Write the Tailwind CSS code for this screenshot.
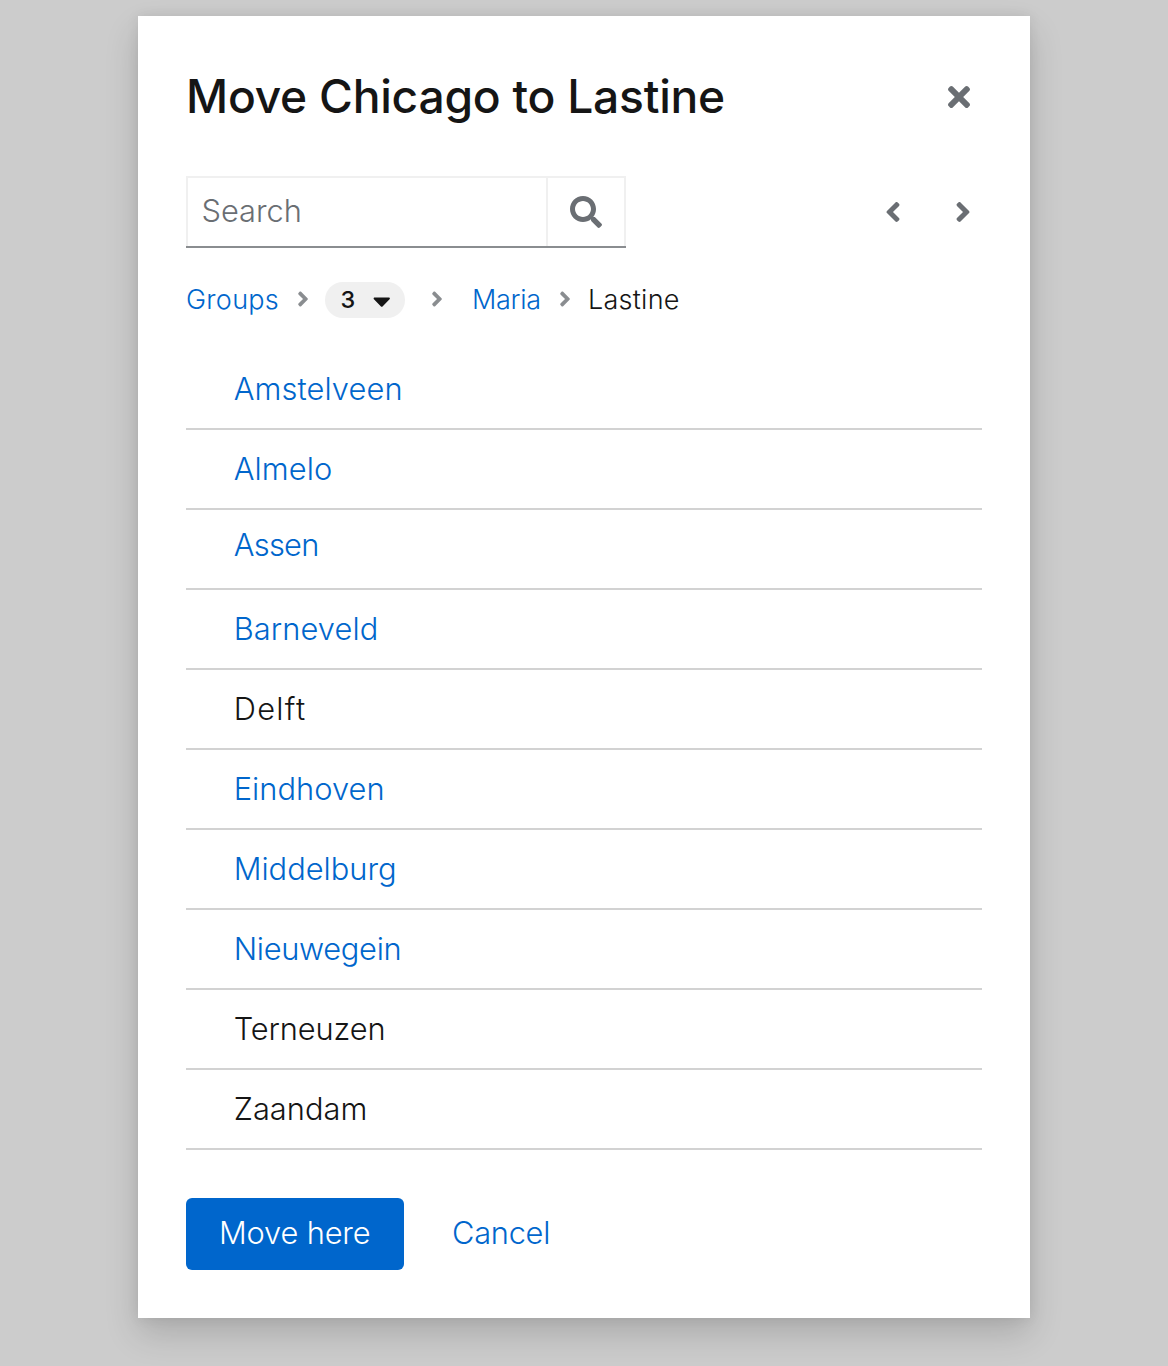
<!DOCTYPE html>
<html lang="en">
<head>
<meta charset="utf-8">
<title>Move Chicago to Lastine</title>
<script src="https://cdn.jsdelivr.net/npm/@tailwindcss/browser@4"></script>
</head>
<body class="min-h-screen bg-[#cccccc] pt-4 font-['Inter',sans-serif] font-light text-[#151515]">
<svg class="hidden">
  <symbol id="angle-right" viewBox="0 0 256 512"><path d="M224.3 273l-136 136c-9.4 9.4-24.6 9.4-33.9 0l-22.6-22.6c-9.4-9.4-9.4-24.6 0-33.9l96.4-96.4-96.4-96.4c-9.4-9.4-9.4-24.6 0-33.9L54.3 103c9.4-9.4 24.6-9.4 33.9 0l136 136c9.5 9.4 9.5 24.6.1 34z"/></symbol>
</svg>
<main role="dialog" class="mx-auto flex h-[1302px] w-[892px] flex-col bg-white px-12 shadow-[0_16px_32px_0_rgba(3,3,3,0.16),0_0_12px_0_rgba(3,3,3,0.08)]">
  <header class="flex h-[160px] items-center justify-between pr-3">
    <h1 class="text-[46.2px] leading-[58px] font-[450] tracking-[-0.25px]">Move Chicago to Lastine</h1>
    <button aria-label="Close" class="text-[#6a6e73]">
      <svg class="mt-[2px] h-8 w-[22px]" viewBox="0 0 352 512" fill="currentColor"><path d="M242.72 256l100.07-100.07c12.28-12.28 12.28-32.19 0-44.48l-22.24-22.24c-12.28-12.28-32.19-12.28-44.48 0L176 189.28 75.93 89.21c-12.28-12.28-32.19-12.28-44.48 0L9.21 111.45c-12.28 12.28-12.28 32.19 0 44.48L109.28 256 9.21 356.07c-12.28 12.28-12.28 32.19 0 44.48l22.24 22.24c12.28 12.28 32.2 12.28 44.48 0L176 322.72l100.07 100.07c12.28 12.28 32.2 12.28 44.48 0l22.24-22.24c12.28-12.28 12.28-32.19 0-44.48L242.72 256z"/></svg>
    </button>
  </header>

  <div class="flex h-[72px] items-center justify-between pr-[10.7px]">
    <div class="flex h-[72px] w-[440px] border-b-2 border-[#8a8d90] text-[#6a6e73]">
      <div class="flex w-[360px] items-center border-t-2 border-l-2 border-[#f0f0f0] pb-[2px] pl-[13.5px] text-[30.8px]">Search</div>
      <button aria-label="Search" class="flex w-20 items-center justify-center border-2 border-b-0 border-[#f0f0f0]">
        <svg class="size-8" viewBox="0 0 512 512" fill="currentColor"><path d="M505 442.7L405.3 343c-4.5-4.5-10.6-7-17-7H372c27.6-35.3 44-79.7 44-128C416 93.1 322.9 0 208 0S0 93.1 0 208s93.1 208 208 208c48.3 0 92.7-16.4 128-44v16.3c0 6.4 2.5 12.5 7 17l99.7 99.7c9.4 9.4 24.6 9.4 33.9 0l28.3-28.3c9.4-9.4 9.4-24.6.1-34zM208 336c-70.7 0-128-57.2-128-128 0-70.7 57.2-128 128-128 70.7 0 128 57.2 128 128 0 70.7-57.2 128-128 128z"/></svg>
      </button>
    </div>
    <div class="flex gap-[54.2px] text-[#6a6e73]">
      <button aria-label="Previous"><svg class="h-8 w-4 rotate-180" fill="currentColor"><use href="#angle-right"/></svg></button>
      <button aria-label="Next"><svg class="h-8 w-4" fill="currentColor"><use href="#angle-right"/></svg></button>
    </div>
  </div>

  <nav class="flex h-[102px] items-center text-[27px] whitespace-nowrap">
    <a class="w-[111px] pt-[2px] tracking-[0.27px] text-[#0066cc]">Groups</a>
    <svg class="h-6 w-3 text-[#8a8d90]" fill="currentColor"><use href="#angle-right"/></svg>
    <button class="mt-[2px] ml-4 flex h-9 w-20 items-center rounded-full bg-[#f0f0f0] pl-[15.5px] text-[23.5px] font-medium">
      <span class="w-8 text-left">3</span>
      <svg class="mt-px h-7 w-[17.5px]" viewBox="0 0 320 512" fill="currentColor"><path d="M31.3 192h257.3c17.8 0 26.7 21.5 14.1 34.1L174.1 354.8c-7.8 7.8-20.5 7.8-28.3 0L17.2 226.1C4.6 213.5 13.5 192 31.3 192z"/></svg>
    </button>
    <svg class="ml-[25.5px] h-6 w-3 text-[#8a8d90]" fill="currentColor"><use href="#angle-right"/></svg>
    <a class="ml-[29.5px] w-[87px] pt-[2px] tracking-[-0.3px] text-[#0066cc]">Maria</a>
    <svg class="h-6 w-3 text-[#8a8d90]" fill="currentColor"><use href="#angle-right"/></svg>
    <span class="ml-[17px] pt-[2px] tracking-[0.26px]">Lastine</span>
  </nav>

  <ul class="text-[30.8px] text-[#0066cc] *:flex *:h-20 *:items-center *:border-b-2 *:border-[#d2d2d2] *:pl-[47.7px]">
    <li><a class="tracking-[0.1px]">Amstelveen</a></li>
    <li><a class="tracking-[0.1px]">Almelo</a></li>
    <li class="pb-2"><a class="tracking-[-0.7px]">Assen</a></li>
    <li><a class="tracking-[0.1px]">Barneveld</a></li>
    <li class="text-[#151515]"><span class="tracking-[1.3px]">Delft</span></li>
    <li><a class="tracking-[0.05px]">Eindhoven</a></li>
    <li><a>Middelburg</a></li>
    <li><a class="tracking-[-0.3px]">Nieuwegein</a></li>
    <li class="text-[#151515]"><span class="tracking-[-0.1px]">Terneuzen</span></li>
    <li class="text-[#151515]"><span class="tracking-[0.05px]">Zaandam</span></li>
  </ul>

  <footer class="mt-12 flex text-[30.8px]">
    <button class="flex h-[72px] w-[218px] items-center rounded-md bg-[#0066cc] pb-[2px] pl-[33px] tracking-[-0.15px] text-white">Move here</button>
    <button class="ml-12 flex h-[72px] items-center pb-[2px] tracking-[-0.27px] text-[#0066cc]">Cancel</button>
  </footer>
</main>
</body>
</html>
